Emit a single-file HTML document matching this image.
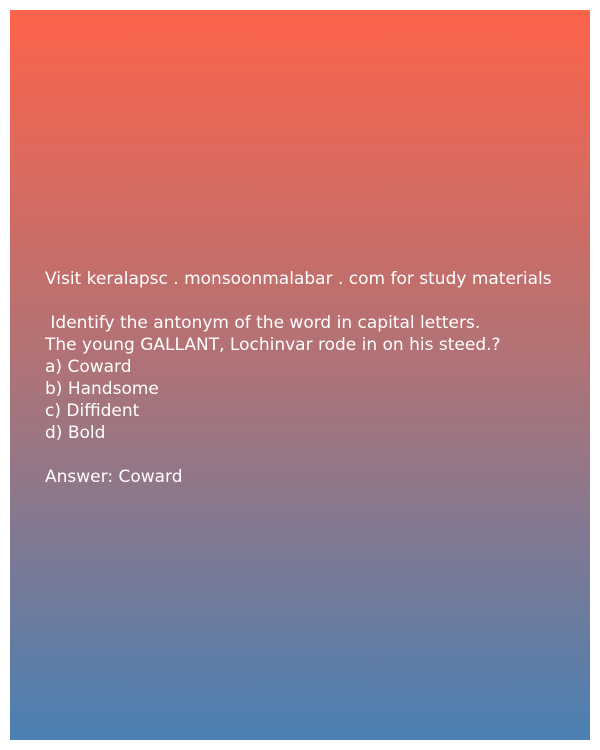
<!DOCTYPE html>
<html><head><style>
html,body{margin:0;padding:0;background:#fff;width:600px;height:750px;overflow:hidden}
.box{position:absolute;left:10px;top:10px;width:580px;height:730px;background:linear-gradient(#fd634a,#ad7378 50%,#4a80b3)}
.t{position:absolute;left:35px;top:258px;color:#fff;font:17px/22px "DejaVu Sans","Liberation Sans",sans-serif;white-space:pre}
</style></head><body>
<div class="box"><div class="t">Visit keralapsc . monsoonmalabar . com for study materials

 Identify the antonym of the word in capital letters.
The young GALLANT, Lochinvar rode in on his steed.?
a) Coward
b) Handsome
c) Diffident
d) Bold

Answer: Coward</div></div>
</body></html>
